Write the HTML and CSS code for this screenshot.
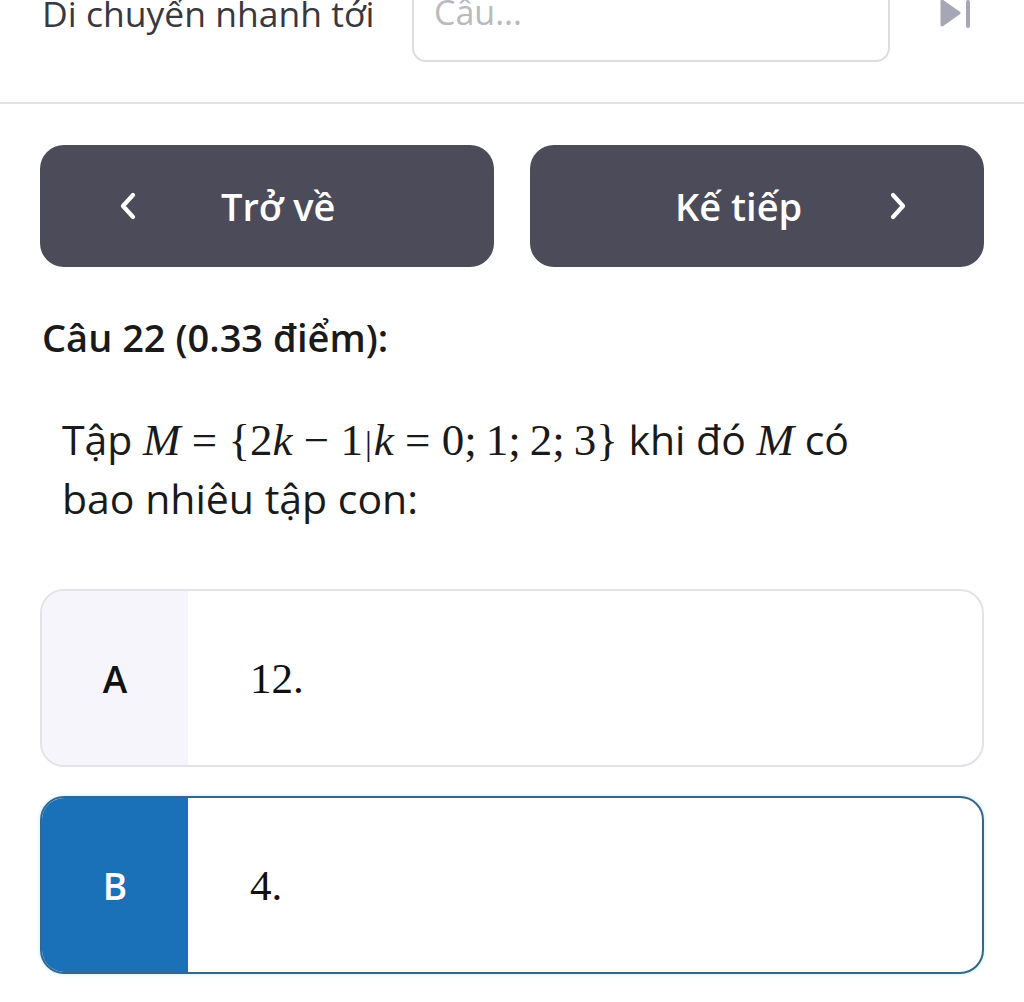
FILE: index.html
```html
<!DOCTYPE html>
<html lang="vi">
<head>
<meta charset="utf-8">
<title>Câu 22</title>
<link rel="stylesheet" href="styles.css">
</head>
<body>
<div class="jump">
  <span class="jump-label">Di chuyển nhanh tới</span>
  <div class="jump-input">Câu...</div>
  <svg class="jump-icon" width="36" height="30" viewBox="0 0 36 30">
    <path d="M2 1 L19 13 L2 25 Z" fill="#a6a6b6" stroke="#a6a6b6" stroke-width="3" stroke-linejoin="round"/>
    <rect x="26" y="0" width="4" height="28" rx="2" fill="#a6a6b6"/>
  </svg>
</div>
<div class="divider"></div>
<div class="nav">
  <button class="nav-btn prev">
    <svg class="chev" width="20" height="28" viewBox="0 0 20 28"><path d="M15 3 L5 14 L15 25" fill="none" stroke="#fff" stroke-width="4.2" stroke-linecap="round" stroke-linejoin="round"/></svg>
    <span class="nav-text">Trở về</span>
  </button>
  <button class="nav-btn next">
    <span class="nav-text">Kế tiếp</span>
    <svg class="chev" width="20" height="28" viewBox="0 0 20 28"><path d="M5 3 L15 14 L5 25" fill="none" stroke="#fff" stroke-width="4.2" stroke-linecap="round" stroke-linejoin="round"/></svg>
  </button>
</div>
<h2 class="q-title">Câu 22 (0.33 điểm):</h2>
<p class="q-body">Tập <span class="math"><i>M</i> = {2<i>k</i> − 1<span class="bar">|</span><i>k</i> = 0;&#8201;1;&#8201;2;&#8201;3}</span> khi đó <span class="math"><i>M</i></span> có bao nhiêu tập con:</p>
<div class="options">
  <div class="option">
    <div class="opt-letter">A</div>
    <div class="opt-text">12.</div>
  </div>
  <div class="option selected">
    <div class="opt-letter">B</div>
    <div class="opt-text">4.</div>
  </div>
  <div class="option next-peek"></div>
</div>
</body>
</html>
```
FILE: styles.css
```css
* { box-sizing: border-box; }
html, body { margin: 0; padding: 0; background: #fff; }
body {
  font-family: "Open Sans", "Noto Sans", sans-serif;
  color: #1a1a1a;
  width: 1024px;
  height: 1002px;
  overflow: hidden;
}
.jump {
  display: flex;
  align-items: flex-start;
  height: 82px;
  margin-top: -20px;
  padding-left: 42px;
}
.jump-label {
  font-size: 35.5px;
  color: #38383e;
  margin-top: 9px;
  width: 370px;
  white-space: nowrap;
}
.jump-input {
  width: 478px;
  height: 82px;
  border: 2px solid #dcdce2;
  border-top: none;
  border-radius: 0 0 14px 14px;
  font-size: 34px;
  color: #b9b9c0;
  padding: 9px 0 0 20px;
}
.jump-icon {
  margin: 20px 0 0 50px;
}
.divider {
  height: 2px;
  background: #e3e3e8;
  margin-top: 40px;
}
.nav {
  display: flex;
  gap: 36px;
  padding: 41px 40px 0;
}
.nav-btn {
  flex: 1;
  height: 122px;
  border: none;
  border-radius: 24px;
  background: #4b4b59;
  color: #fff;
  display: flex;
  align-items: center;
  font-family: inherit;
  padding: 0;
}
.nav-btn .chev { flex: none; }
.nav-text {
  font-size: 38px;
  font-weight: 600;
  white-space: nowrap;
}
.prev .chev { margin-left: 78px; }
.prev .nav-text { margin-left: 83px; }
.next .nav-text { margin-left: 145px; }
.next .chev { margin-left: 86px; }
.q-title {
  margin: 48px 0 0 42px;
  font-size: 38px;
  font-weight: 600;
  line-height: 44px;
  color: #1a1a1a;
}
.q-body {
  margin: 53px 0 0 62px;
  width: 830px;
  font-size: 41px;
  line-height: 54px;
  color: #1a1a1a;
}
.math {
  font-family: "Liberation Serif", "Times New Roman", serif;
  font-size: 45px;
}
.math .bar { font-size: 34px; margin: 0 2px; }
.options {
  padding: 64px 40px 0;
  display: flex;
  flex-direction: column;
  gap: 29px;
}
.option {
  display: flex;
  flex: none;
  height: 178px;
  border: 2px solid #e2e2e8;
  border-radius: 24px;
  overflow: hidden;
  background: #fff;
}
.opt-letter {
  width: 146px;
  flex: none;
  background: #f5f5fb;
  display: flex;
  align-items: center;
  justify-content: center;
  font-size: 37px;
  font-weight: 600;
  color: #111;
}
.opt-text {
  display: flex;
  align-items: center;
  padding-left: 62px;
  font-family: "Liberation Serif", "Times New Roman", serif;
  font-size: 43px;
  color: #111;
}
.option.selected {
  border-color: #36668a;
  box-shadow: 0 0 4px #bfe9fb;
}
.option.selected .opt-letter {
  background: #1b71b7;
  color: #fff;
}
.next-peek {
  border-color: #f0f0f4;
}
```
